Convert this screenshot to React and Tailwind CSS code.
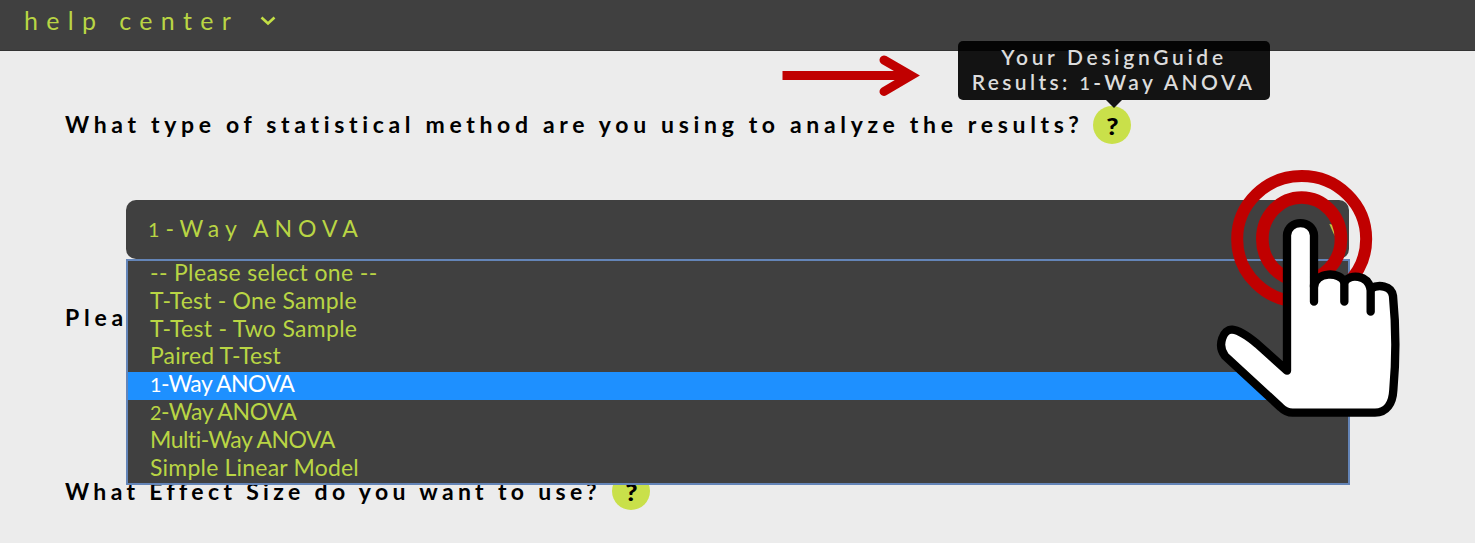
import React from "react";

const options = [
  { text: "-- Please select one --", cls: "tracking-[0.35px]" },
  { text: "T-Test - One Sample", cls: "tracking-[0.2px]" },
  { text: "T-Test - Two Sample", cls: "tracking-[0.3px]" },
  { text: "Paired T-Test", cls: "tracking-[0.15px]" },
  { digit: "1", text: "-Way ANOVA", cls: "tracking-[-0.6px]", active: true },
  { digit: "2", text: "-Way ANOVA", cls: "tracking-[-0.4px]" },
  { text: "Multi-Way ANOVA", cls: "tracking-[-0.5px]" },
  { text: "Simple Linear Model", cls: "tracking-[0.2px]" },
];

function Digit({ children }) {
  return <span className="text-[0.86em]">{children}</span>;
}

function HelpBadge({ children }) {
  return (
    <span className="relative flex h-[38px] w-[38px] shrink-0 items-center justify-center rounded-full bg-[#c9e04a] pt-[2px] pl-px text-[23px] font-black tracking-normal text-black">
      <span className="scale-x-115">?</span>{children}
    </span>
  );
}

function Tooltip() {
  return (
    <span className="absolute -top-[65px] -left-[135px] flex h-[59px] w-[312px] flex-col items-center justify-center rounded-[5px] bg-black/92 pb-[2px] text-[21px] leading-[25px] font-semibold whitespace-nowrap text-[#dcdcdc]">
      <span className="tracking-[3.7px]">Your DesignGuide</span>
      <span className="pr-px tracking-[3.4px]">
        Results: <Digit>1</Digit>-Way ANOVA
      </span>
      <svg className="absolute top-full left-[148px]" width="16" height="8" viewBox="0 0 16 8">
        <path d="M0 0H16L8 8Z" fill="#131313" />
      </svg>
    </span>
  );
}

function Arrow() {
  return (
    <svg className="absolute top-[50px] left-[780px] z-20" width="145" height="50" viewBox="0 0 145 50" fill="none" stroke="#c00000" strokeWidth="9">
      <path d="M2.500 25.500H130" />
      <path d="M104 10L131 25.500L104 41.500" strokeLinecap="round" />
    </svg>
  );
}

function ClickHand() {
  return (
    <svg className="absolute top-[160px] left-[1200px] z-20" width="220" height="270" viewBox="0 0 660 810" fill="none">
      <path d="M388 192Q398 192 404 202V228Z" fill="#c3c43f" />
      <ellipse cx="305" cy="237" rx="193.500" ry="189" stroke="#c00000" strokeWidth="36" />
      <ellipse cx="305" cy="237" rx="118" ry="124.500" stroke="#c00000" strokeWidth="38" />
      <path
        d="M261 632V226C263 177 340 177 342 226V380C348 334 420 334 433 366C450 340 502 344 512 386C535 372 574 376 579 408C590 520 588 600 580 690C578 730 560 758 525 758H278Q258 758 242 742L75 588C50 555 70 507 97 509C120 511 148 532 172 552Z"
        fill="#fff"
        stroke="#000"
        strokeWidth="25"
        strokeLinejoin="round"
      />
      <path d="M342 375V425M433 366V425M512 386V455" stroke="#000" strokeWidth="25" strokeLinecap="round" />
    </svg>
  );
}

function Select() {
  return (
    <div className="relative mt-14 ml-[126px] w-[1223px]">
      <div className="flex h-[59px] items-center rounded-[10px] bg-[#404040] pb-[2px] pl-[22px] text-[23px] tracking-[5.9px] text-[#b9d544]">
        <span><Digit>1</Digit>-Way ANOVA</span>
      </div>
      <ul className="absolute top-[59px] left-0 z-10 h-[226px] w-[1224px] border-2 border-[#6485b8] bg-[#404040] text-[23px] leading-[23px] text-[#b9d544]">
        {options.map((o) => (
          <li
            key={(o.digit || "") + o.text}
            className={"h-[27.8px] pl-[22px] whitespace-nowrap " + o.cls + (o.active ? " bg-[#1e90ff] text-white" : "")}
          >
            {o.digit && <Digit>{o.digit}</Digit>}
            {o.text}
          </li>
        ))}
      </ul>
    </div>
  );
}

export default function App() {
  return (
    <div className="relative h-[543px] w-[1475px] overflow-hidden bg-[#ececec] font-[Lato,sans-serif]">
      <header className="flex h-[51px] items-start gap-[21px] border-b border-[#333] bg-[#404040] pt-[5px] pl-6 text-[25px] leading-[30px] text-[#b9d544]">
        <span className="tracking-[8.350px]">help center</span>
        <svg className="mt-[11px]" width="16" height="10" viewBox="0 0 16 10" fill="none" stroke="#c3df45" strokeWidth="2.600">
          <path d="M1.500 1.500L8 7.500L14.500 1.500" />
        </svg>
      </header>
      <main className="pt-[55px] text-[23px] font-bold text-black">
        <div className="flex h-[38px] items-center gap-2 pl-[65px] whitespace-nowrap">
          <h2 className="w-[1020px] pb-[2px] tracking-[4.67px]">What type of statistical method are you using to analyze the results?</h2>
          <HelpBadge><Tooltip /></HelpBadge>
        </div>
        <div className="font-normal"><Select /></div>
        <h2 className="mt-10 flex h-[38px] items-center pb-[2px] pl-[65px] tracking-[4.800px]">Please</h2>
        <div className="mt-[135px] flex h-[38px] items-center gap-2 pl-[65px] whitespace-nowrap">
          <h2 className="w-[539px] tracking-[4.34px]">What Effect Size do you want to use?</h2>
          <HelpBadge />
        </div>
      </main>
      <Arrow />
      <ClickHand />
    </div>
  );
}
